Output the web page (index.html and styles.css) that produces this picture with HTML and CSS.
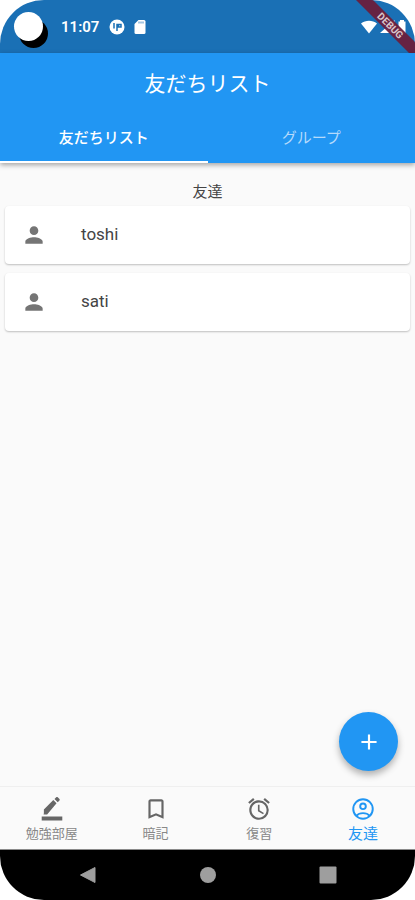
FILE: index.html
```html
<!DOCTYPE html>
<html lang="ja">
<head>
<meta charset="utf-8">
<meta name="viewport" content="width=device-width, initial-scale=1">
<title>友だちリスト</title>
<link rel="stylesheet" href="styles.css">
</head>
<body>
<div class="phone">
  <div class="status">
    <span class="camera"></span>
    <span class="clock">11:07</span>
    <svg class="status-icon" width="16" height="16" viewBox="0 0 16 16"><circle cx="8" cy="8" r="7.500" fill="#fff"/><path d="M5 4v5.500M8 12V4.800M9.500 5.500h2.500v2.500h-2.500z" fill="none" stroke="#1a70b5" stroke-width="1.500"/></svg>
    <svg class="status-icon" width="12" height="16" viewBox="0 0 12 16"><path d="M4.500 1H10a1.500 1.500 0 0 1 1.500 1.500v11A1.500 1.500 0 0 1 10 15H2a1.500 1.500 0 0 1-1.500-1.500V5z" fill="#fff"/><path d="M5 2.500v2M7 2.500v2M9 2.500v2" stroke="#1a70b5" stroke-width=".8"/></svg>
    <span class="signals">
      <svg width="16" height="16" viewBox="0 0 16 16"><path d="M0 4.500C4.500.7 11.500.7 16 4.500L8 14.500z" fill="#fff"/></svg>
      <svg width="16" height="16" viewBox="0 0 16 16"><path d="M15.500 1v13H1z" fill="#fff"/></svg>
      <svg width="10" height="16" viewBox="0 0 10 16"><path d="M3 1h4v1.500h1.500v12h-7v-12H3z" fill="#fff"/></svg>
    </span>
  </div>
  <svg class="ribbon" width="60" height="60" viewBox="0 0 60 60"><path d="M1 0h17l42 42v17z" fill="#6b1d3c" fill-opacity=".94"/><text x="35" y="29" transform="rotate(45 35 26)" text-anchor="middle">DEBUG</text></svg>

  <header class="appbar">
    <h1>友だちリスト</h1>
    <nav class="tabs">
      <button class="tab selected" type="button">友だちリスト</button>
      <button class="tab" type="button">グループ</button>
    </nav>
  </header>

  <main class="content">
    <h2>友達</h2>
    <ul class="friends">
      <li class="card">
        <svg width="26" height="26" viewBox="0 0 24 24" fill="#757575"><path d="M12 12c2.210 0 4-1.790 4-4s-1.790-4-4-4-4 1.790-4 4 1.790 4 4 4zm0 2c-2.670 0-8 1.340-8 4v2h16v-2c0-2.660-5.330-4-8-4z"/></svg>
        <span>toshi</span>
      </li>
      <li class="card">
        <svg width="26" height="26" viewBox="0 0 24 24" fill="#757575"><path d="M12 12c2.210 0 4-1.790 4-4s-1.790-4-4-4-4 1.790-4 4 1.790 4 4 4zm0 2c-2.670 0-8 1.340-8 4v2h16v-2c0-2.660-5.330-4-8-4z"/></svg>
        <span>sati</span>
      </li>
    </ul>
    <button class="fab" type="button" aria-label="追加"><svg width="26" height="26" viewBox="0 0 24 24"><path d="M19 13h-6v6h-2v-6H5v-2h6V5h2v6h6v2z" fill="#fff"/></svg></button>
  </main>

  <nav class="bottom">
    <a href="#study"><svg width="26" height="26" viewBox="0 0 24 24" fill="currentColor"><path d="M16.200 6.800L13.200 3.800l-8.700 8.700v3.500l-.3 1h3.300zM18.900 4.200c.4-.4.4-1 0-1.400l-1.600-1.600c-.4-.4-1-.4-1.400 0L14.300 2.800l3 3z"/><path d="M2.500 19h19v3.500h-19z"/></svg><span>勉強部屋</span></a>
    <a href="#memorize"><svg width="26" height="26" viewBox="0 0 24 24" fill="currentColor"><path d="M17 3H7c-1.100 0-1.990.9-1.990 2L5 21l7-3 7 3V5c0-1.100-.9-2-2-2zm0 15l-5-2.180L7 18V5h10v13z"/></svg><span>暗記</span></a>
    <a href="#review"><svg width="26" height="26" viewBox="0 0 24 24" fill="currentColor"><path d="M22 5.720l-4.600-3.860-1.290 1.530 4.600 3.860L22 5.720zM7.880 3.390L6.600 1.860 2 5.710l1.290 1.530 4.590-3.850zM12.500 8H11v6l4.750 2.850.75-1.230-4-2.370V8zM12 4c-4.970 0-9 4.030-9 9s4.020 9 9 9a9 9 0 0 0 0-18zm0 16c-3.870 0-7-3.130-7-7s3.130-7 7-7 7 3.130 7 7-3.130 7-7 7z"/></svg><span>復習</span></a>
    <a class="current" href="#friends"><svg width="26" height="26" viewBox="0 0 24 24" fill="none" stroke="currentColor" stroke-width="1.800"><circle cx="12" cy="12" r="9"/><circle cx="12" cy="9.500" r="2.600"/><path d="M5.800 18.200c3-3.200 9.400-3.200 12.400 0"/></svg><span>友達</span></a>
  </nav>

  <div class="system">
    <button type="button" aria-label="戻る"><svg width="18" height="18" viewBox="0 0 18 18"><path d="M16 1.500v15L1.500 9z" fill="#9e9e9e" stroke="#9e9e9e" stroke-linejoin="round"/></svg></button>
    <button type="button" aria-label="ホーム"><svg width="18" height="18" viewBox="0 0 18 18"><circle cx="9" cy="9" r="8" fill="#9e9e9e"/></svg></button>
    <button type="button" aria-label="アプリ履歴"><svg width="18" height="18" viewBox="0 0 18 18"><rect x=".5" y=".5" width="17" height="17" rx="1" fill="#9e9e9e"/></svg></button>
  </div>
</div>
</body>
</html>
```
FILE: styles.css
```css
* { box-sizing: border-box; }

body {
  margin: 0;
  background: #fff;
  font-family: Roboto, "Noto Sans CJK JP", sans-serif;
}

button {
  border: 0;
  padding: 0;
  background: none;
  font: inherit;
}

svg { display: block; }

.phone {
  position: relative;
  display: flex;
  flex-direction: column;
  min-height: 100vh;
  overflow: hidden;
  border-radius: 44px;
  background: #fafafa;
}

.status {
  display: flex;
  align-items: center;
  height: 53px;
  padding: 0 8px 0 14px;
  background: #1a70b5;
  color: #fff;
}

.camera {
  width: 29px;
  height: 29px;
  border-radius: 50%;
  background: #fff;
  box-shadow: 5px 7px 0 #000;
}

.clock {
  margin: 0 10px 0 18px;
  font-size: 15px;
  font-weight: 600;
}

.status-icon { margin-right: 9px; }

.signals {
  display: flex;
  gap: 2px;
  margin-left: auto;
}

.ribbon {
  position: absolute;
  top: 0;
  right: 0;
}

.ribbon text {
  fill: #d9c6cc;
  font-size: 10px;
  font-weight: 700;
}

.appbar {
  z-index: 1;
  background: #2196f3;
  box-shadow: 0 2px 5px rgba(0, 0, 0, 0.35);
  color: #fff;
}

h1 {
  margin: 0;
  font-size: 21px;
  font-weight: 400;
  line-height: 62px;
  text-align: center;
}

.tabs { display: flex; }

.tab {
  flex: 1;
  height: 48px;
  border-bottom: 2px solid transparent;
  color: #b5dafb;
  font-size: 15px;
  line-height: 46px;
}

.tab.selected {
  border-color: #fff;
  color: #fff;
  font-weight: 500;
}

.content {
  position: relative;
  flex: 1;
  padding: 17px 5px;
}

h2 {
  margin: 0 0 2px;
  color: #444;
  font-size: 15px;
  font-weight: 400;
  line-height: 24px;
  text-align: center;
}

.friends {
  display: flex;
  flex-direction: column;
  gap: 9px;
  margin: 0;
  padding: 0;
  list-style: none;
}

.card {
  display: flex;
  align-items: center;
  gap: 34px;
  height: 58px;
  padding: 0 16px;
  border-radius: 4px;
  background: #fff;
  box-shadow: 0 1px 2px rgba(0, 0, 0, 0.24);
  color: #444;
  font-size: 17px;
  line-height: 20px;
}

.card span { padding-bottom: 2px; }

.fab {
  position: absolute;
  right: 17px;
  bottom: 15px;
  display: grid;
  place-items: center;
  width: 59px;
  height: 59px;
  border-radius: 50%;
  background: #2196f3;
  box-shadow: 0 4px 7px rgba(0, 0, 0, 0.3);
}

.bottom {
  display: flex;
  height: 64px;
  padding-top: 9px;
  border-top: 1px solid #efefef;
  border-bottom: 1px solid #8a8a8a;
}

.bottom a {
  flex: 1;
  display: flex;
  flex-direction: column;
  align-items: center;
  color: #666;
  font-size: 13px;
  line-height: 24px;
  text-decoration: none;
}

.bottom span { color: #888; }

.bottom .current {
  color: #2196f3;
  font-size: 15px;
}

.bottom .current span { color: inherit; }

.system {
  display: flex;
  justify-content: center;
  gap: 102px;
  height: 50px;
  background: #000;
}
```
